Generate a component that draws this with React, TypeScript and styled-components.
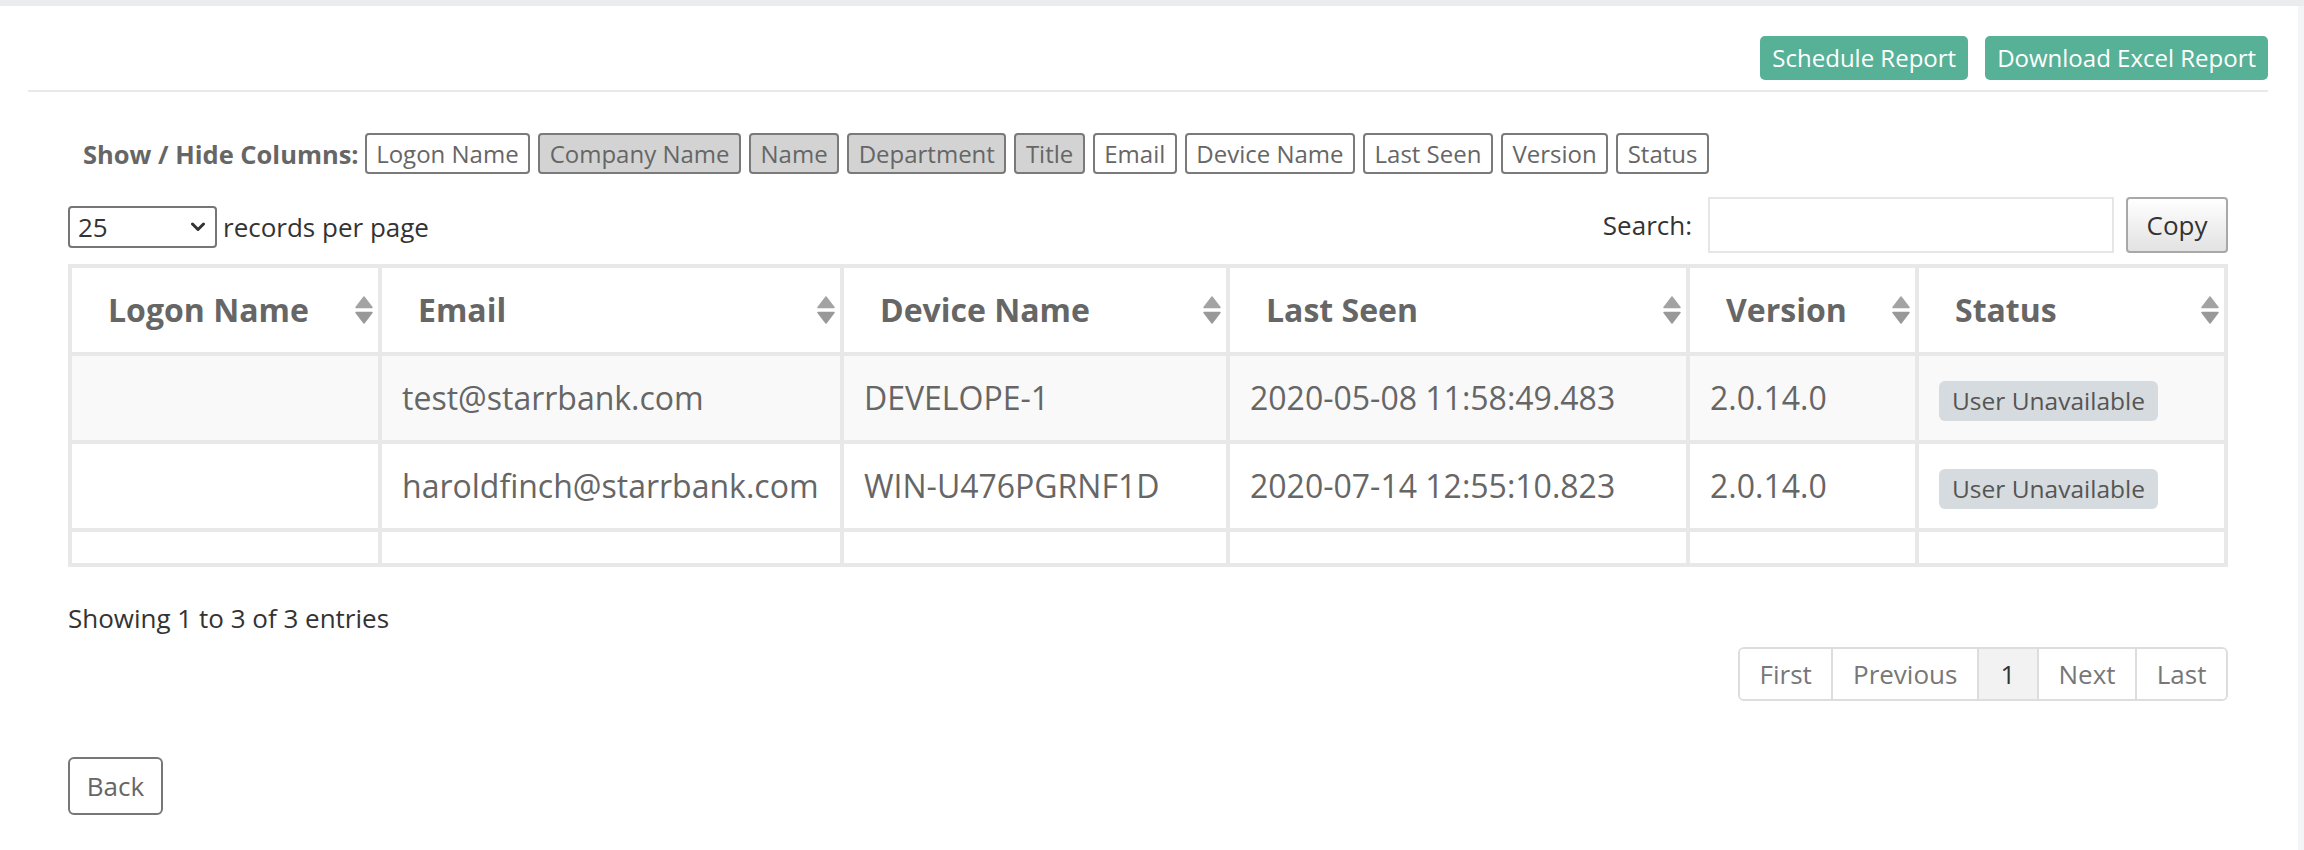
import React from "react";
import styled, { createGlobalStyle } from "styled-components";

const GlobalStyle = createGlobalStyle`
  html, body { margin: 0; padding: 0; }
  body {
    background: #f4f5f6;
    font-family: "Open Sans", "Liberation Sans", sans-serif;
  }
  *, *::before, *::after { box-sizing: border-box; }
  button, input, select { font-family: inherit; }
`;

const Page = styled.div`
  border-top: 6px solid #ebecee;
  min-height: 850px;
`;

const Panel = styled.main`
  background: #fff;
  margin-right: 6px;
  min-height: 844px;
  padding: 30px 30px 0 28px;
`;

const TopBar = styled.header`
  display: flex;
  justify-content: flex-end;
  gap: 17px;
  padding-bottom: 10px;
  border-bottom: 2px solid #e9e9e9;
`;

const GreenButton = styled.button`
  font-size: 24px;
  line-height: 32px;
  color: #fff;
  background: #57b197;
  border: 0;
  border-radius: 5px;
  padding: 6px 12px;
`;

const Content = styled.section`
  padding: 0 40px;
`;

const ToggleRow = styled.div`
  display: flex;
  align-items: center;
  gap: 8px;
  margin-top: 41px;
  padding-left: 15px;
`;

const ToggleLabel = styled.span`
  font-weight: 700;
  font-size: 25.5px;
  color: #666;
  margin-right: -2px;
`;

const ToggleButton = styled.button<{ $off: boolean }>`
  font-size: 24px;
  line-height: 33px;
  color: #666;
  background: ${(p) => (p.$off ? "#d3d3d3" : "#fff")};
  border: 2px solid #7a7a7a;
  border-radius: 4px;
  padding: 2px 9.5px;
`;

const ControlsRow = styled.div`
  display: flex;
  justify-content: space-between;
  align-items: center;
  height: 56px;
  margin-top: 23px;
`;

const LengthGroup = styled.label`
  display: flex;
  align-items: center;
  gap: 6px;
  margin-top: 4px;
  font-size: 26px;
  color: #333;
`;

const SelectBox = styled.div`
  display: flex;
  align-items: center;
  width: 149px;
  height: 42px;
  border: 2px solid #767676;
  border-radius: 4px;
  padding: 0 10px 0 8px;
`;

const Select = styled.select`
  appearance: none;
  -webkit-appearance: none;
  flex: 1;
  min-width: 0;
  border: 0;
  background: transparent;
  font-size: 26px;
  color: #333;
  padding: 0;
  outline: none;
`;

const SearchGroup = styled.div`
  display: flex;
  align-items: center;
  font-size: 26px;
  color: #333;
`;

const SearchLabel = styled.span`
  margin-right: 16px;
`;

const SearchInput = styled.input`
  width: 406px;
  height: 56px;
  border: 2px solid #e6e6e6;
  outline: none;
  font-size: 26px;
  padding: 0 10px;
`;

const CopyButton = styled.button`
  margin-left: 12px;
  width: 102px;
  height: 56px;
  border: 2px solid #a8a8a8;
  border-radius: 4px;
  background: linear-gradient(#ffffff, #e2e2e2);
  font-size: 26px;
  color: #333;
  padding: 0;
`;

const Table = styled.table`
  margin-top: 11px;
  width: 2160px;
  table-layout: fixed;
  border-collapse: separate;
  border-spacing: 0;
`;

const Th = styled.th<{ $w: number }>`
  width: ${(p) => p.$w}px;
  text-align: left;
  font-size: 32px;
  font-weight: 700;
  line-height: 53px;
  color: #666;
  padding: 15px 5px 16px 36px;
  border-top: 4px solid #e8e8e8;
  border-right: 4px solid #e8e8e8;
  border-bottom: 4px solid #e8e8e8;
  &:first-child { border-left: 4px solid #e8e8e8; }
`;

const HeadInner = styled.div`
  display: flex;
  align-items: center;
  justify-content: space-between;
`;

const Tr = styled.tr<{ $striped: boolean }>`
  background: ${(p) => (p.$striped ? "#f9f9f9" : "#fff")};
`;

const Td = styled.td`
  font-size: 32px;
  line-height: 53px;
  color: #666;
  padding: 15px 20px 16px 20px;
  white-space: nowrap;
  border-right: 4px solid #e8e8e8;
  border-bottom: 4px solid #e8e8e8;
  &:first-child { border-left: 4px solid #e8e8e8; }
`;

const Badge = styled.span`
  display: inline-block;
  vertical-align: middle;
  background: #d5dbde;
  color: #555;
  font-size: 24.5px;
  line-height: 40px;
  padding: 0 13px;
  border-radius: 6px;
`;

const Info = styled.div`
  margin-top: 33px;
  font-size: 26px;
  line-height: 36px;
  color: #333;
`;

const PaginationRow = styled.nav`
  display: flex;
  justify-content: flex-end;
  margin-top: 11px;
`;

const Pager = styled.div`
  display: flex;
  border: 2px solid #dddddd;
  border-radius: 6px;
  overflow: hidden;
`;

const PageItem = styled.span<{ $active?: boolean }>`
  font-size: 26px;
  line-height: 50px;
  padding: 0 ${(p) => (p.$active ? 21.5 : 19.6)}px;
  color: ${(p) => (p.$active ? "#333" : "#777")};
  background: ${(p) => (p.$active ? "#f2f2f2" : "#fff")};
  & + & { border-left: 2px solid #dddddd; }
`;

const BackButton = styled.button`
  display: block;
  margin-top: 56px;
  width: 95px;
  height: 58px;
  border: 2px solid #777;
  border-radius: 6px;
  background: #fff;
  font-size: 26px;
  color: #666;
  padding: 0;
`;

const SortIcon = () => (
  <svg width="18" height="28" viewBox="0 0 18 28" aria-hidden="true">
    <path d="M9 1 L17 11.5 H1 Z" fill="#a3a3a3" strokeLinejoin="round" stroke="#a3a3a3" strokeWidth="1.5" />
    <path d="M1 16.5 H17 L9 27 Z" fill="#999" strokeLinejoin="round" stroke="#999" strokeWidth="1.5" />
  </svg>
);

const Chevron = () => (
  <svg width="14" height="10" viewBox="0 0 14 10" aria-hidden="true">
    <path d="M1.5 2 L7 7.5 L12.5 2" fill="none" stroke="#333" strokeWidth="3" strokeLinecap="round" strokeLinejoin="round" />
  </svg>
);

const toggles = [
  { label: "Logon Name", off: false },
  { label: "Company Name", off: true },
  { label: "Name", off: true },
  { label: "Department", off: true },
  { label: "Title", off: true },
  { label: "Email", off: false },
  { label: "Device Name", off: false },
  { label: "Last Seen", off: false },
  { label: "Version", off: false },
  { label: "Status", off: false },
];

const columns = [
  { label: "Logon Name", w: 314 },
  { label: "Email", w: 462 },
  { label: "Device Name", w: 386 },
  { label: "Last Seen", w: 460 },
  { label: "Version", w: 229 },
  { label: "Status", w: 309 },
];

const rows: (string[] | null)[] = [
  ["", "test@starrbank.com", "DEVELOPE-1", "2020-05-08 11:58:49.483", "2.0.14.0", "User Unavailable"],
  ["", "haroldfinch@starrbank.com", "WIN-U476PGRNF1D", "2020-07-14 12:55:10.823", "2.0.14.0", "User Unavailable"],
  null,
];

export default function App() {
  return (
    <>
      <GlobalStyle />
      <Page>
        <Panel>
          <TopBar>
            <GreenButton>Schedule Report</GreenButton>
            <GreenButton>Download Excel Report</GreenButton>
          </TopBar>
          <Content>
            <ToggleRow>
              <ToggleLabel>Show / Hide Columns:</ToggleLabel>
              {toggles.map((t) => (
                <ToggleButton key={t.label} $off={t.off}>
                  {t.label}
                </ToggleButton>
              ))}
            </ToggleRow>
            <ControlsRow>
              <LengthGroup>
                <SelectBox>
                  <Select defaultValue="25">
                    <option value="10">10</option>
                    <option value="25">25</option>
                    <option value="50">50</option>
                    <option value="100">100</option>
                  </Select>
                  <Chevron />
                </SelectBox>
                records per page
              </LengthGroup>
              <SearchGroup>
                <SearchLabel>Search:</SearchLabel>
                <SearchInput type="search" />
                <CopyButton>Copy</CopyButton>
              </SearchGroup>
            </ControlsRow>
            <Table>
              <thead>
                <tr>
                  {columns.map((c) => (
                    <Th key={c.label} $w={c.w}>
                      <HeadInner>
                        <span>{c.label}</span>
                        <SortIcon />
                      </HeadInner>
                    </Th>
                  ))}
                </tr>
              </thead>
              <tbody>
                {rows.map((r, i) => (
                  <Tr key={i} $striped={i % 2 === 0 && r !== null}>
                    {r
                      ? r.map((cell, j) => (
                          <Td key={j}>{j === 5 ? <Badge>{cell}</Badge> : cell}</Td>
                        ))
                      : columns.map((c) => <Td key={c.label} />)}
                  </Tr>
                ))}
              </tbody>
            </Table>
            <Info>Showing 1 to 3 of 3 entries</Info>
            <PaginationRow>
              <Pager>
                <PageItem>First</PageItem>
                <PageItem>Previous</PageItem>
                <PageItem $active>1</PageItem>
                <PageItem>Next</PageItem>
                <PageItem>Last</PageItem>
              </Pager>
            </PaginationRow>
            <BackButton>Back</BackButton>
          </Content>
        </Panel>
      </Page>
    </>
  );
}
